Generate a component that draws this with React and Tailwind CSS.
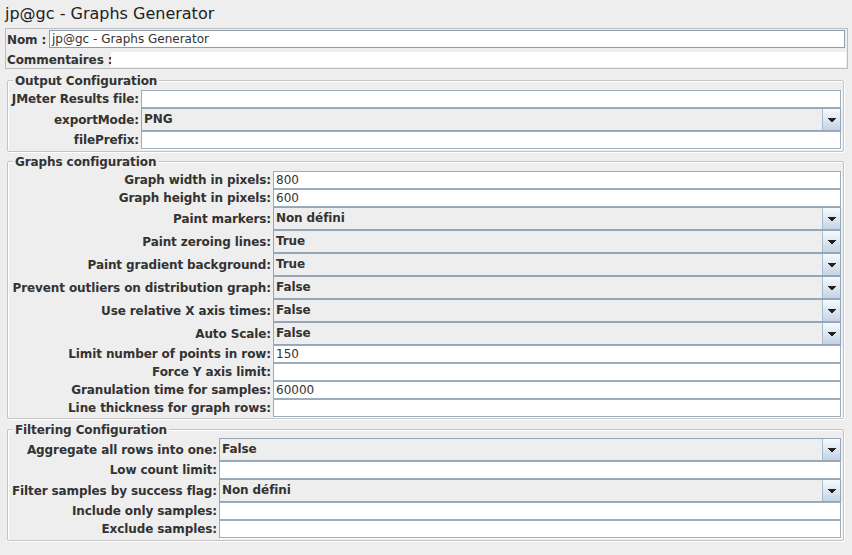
import React from "react";

const TF = ({ value = "" }) => (
  <div className="h-[18px] bg-white border border-[#9eadbc] shadow-[1px_1px_0_#ffffff] px-[2px] leading-[16px] text-[#333333] font-normal whitespace-nowrap overflow-hidden">
    {value}
  </div>
);

const Arrow = () => (
  <svg width="8" height="4" viewBox="0 0 8 4" className="block">
    <path d="M0 0h8v1H0z M1 1h6v1H1z M2 2h4v1H2z M3 3h2v1H3z" fill="#222222" />
  </svg>
);

const Combo = ({ value }) => (
  <div className="h-[23px] flex border border-[#95a6b8] bg-[#eeeeee]">
    <div className="flex-1 pl-[2px] leading-[21px] font-bold tracking-[-0.1px] text-[#333333] whitespace-nowrap overflow-hidden">
      {value}
    </div>
    <div className="w-[18px] border-l border-[#a9bccf] bg-linear-to-b from-[#f7fafd] to-[#c3d4e5] flex items-center justify-center">
      <Arrow />
    </div>
  </div>
);

const Row = ({ label, children }) => (
  <>
    <div className="flex items-center justify-end pr-[2px] font-bold tracking-[-0.1px] whitespace-nowrap text-[#333333]">
      {label}
    </div>
    {children}
  </>
);

const Group = ({ title, cols, className, children }) => (
  <fieldset
    className={
      "ml-[7px] w-[837px] min-w-0 border border-[#c4c4c4] rounded-[2px] shadow-[inset_1px_1px_0_#ffffff,1px_1px_0_#ffffff] pr-[2px] " +
      className
    }
  >
    <legend className="ml-[5px] px-[2px] h-[14px] leading-[17px] font-bold tracking-[-0.1px] bg-[#eeeeee] text-[#333333]">
      {title}
    </legend>
    <div className={"grid " + cols}>{children}</div>
  </fieldset>
);

export default function App() {
  return (
    <div className="w-[852px] h-[555px] overflow-hidden bg-[#eeeeee] text-[12px] text-[#333333] font-['DejaVu_Sans',sans-serif]">
      <div className="pl-[5px] pt-[5px] text-[16px] leading-[18px] text-[#222222]">
        jp@gc - Graphs Generator
      </div>

      <div className="mt-[5px] ml-[5px] w-[843px] border border-[#bdbdbd] p-[1px]">
        <div className="flex h-[18px]">
          <div className="w-[42px] font-bold tracking-[-0.1px] whitespace-nowrap leading-[20px]">Nom :</div>
          <div className="flex-1 mr-[1px] h-[18px] bg-white border border-[#8e9eae] px-[2px] leading-[16px] whitespace-nowrap">
            jp@gc - Graphs Generator
          </div>
        </div>
        <div className="flex h-[19px]">
          <div className="w-[104px] font-bold tracking-[-0.1px] whitespace-nowrap leading-[19px] pt-[3px]">
            Commentaires :
          </div>
          <div className="flex-1 mt-[4px] h-[15px] bg-white"></div>
        </div>
      </div>

      <Group title="Output Configuration" cols="grid-cols-[133px_1fr]" className="mt-[4px] pt-[3px] pb-[2px]">
        <Row label="JMeter Results file:">
          <TF />
        </Row>
        <Row label="exportMode:">
          <Combo value="PNG" />
        </Row>
        <Row label="filePrefix:">
          <TF />
        </Row>
      </Group>

      <Group title="Graphs configuration" cols="grid-cols-[265px_1fr]" className="mt-[2px] pt-[3px] pb-[1px]">
        <Row label="Graph width in pixels:">
          <TF value="800" />
        </Row>
        <Row label="Graph height in pixels:">
          <TF value="600" />
        </Row>
        <Row label="Paint markers:">
          <Combo value="Non défini" />
        </Row>
        <Row label="Paint zeroing lines:">
          <Combo value="True" />
        </Row>
        <Row label="Paint gradient background:">
          <Combo value="True" />
        </Row>
        <Row label="Prevent outliers on distribution graph:">
          <Combo value="False" />
        </Row>
        <Row label="Use relative X axis times:">
          <Combo value="False" />
        </Row>
        <Row label="Auto Scale:">
          <Combo value="False" />
        </Row>
        <Row label="Limit number of points in row:">
          <TF value="150" />
        </Row>
        <Row label="Force Y axis limit:">
          <TF />
        </Row>
        <Row label="Granulation time for samples:">
          <TF value="60000" />
        </Row>
        <Row label="Line thickness for graph rows:">
          <TF />
        </Row>
      </Group>

      <Group title="Filtering Configuration" cols="grid-cols-[211px_1fr]" className="mt-[3px] pt-[2px] pb-[2px]">
        <Row label="Aggregate all rows into one:">
          <Combo value="False" />
        </Row>
        <Row label="Low count limit:">
          <TF />
        </Row>
        <Row label="Filter samples by success flag:">
          <Combo value="Non défini" />
        </Row>
        <Row label="Include only samples:">
          <TF />
        </Row>
        <Row label="Exclude samples:">
          <TF />
        </Row>
      </Group>
    </div>
  );
}
